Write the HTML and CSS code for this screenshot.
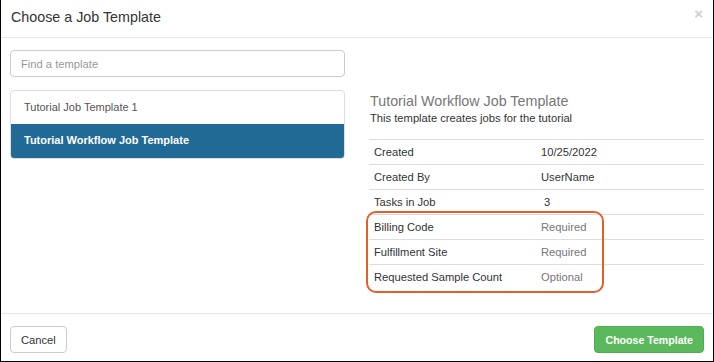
FILE: index.html
```html
<!DOCTYPE html>
<html lang="en">
<head>
  <meta charset="UTF-8">
  <title>Choose a Job Template</title>
  <link rel="stylesheet" href="styles.css">
</head>
<body>
  <div class="modal">
    <div class="modal-header">
      <h4 class="modal-title">Choose a Job Template</h4>
      <span class="close">&times;</span>
    </div>
    <div class="modal-body">
      <div class="col-left">
        <input class="search" type="text" placeholder="Find a template">
        <div class="list-group">
          <div class="list-item">Tutorial Job Template 1</div>
          <div class="list-item active">Tutorial Workflow Job Template</div>
        </div>
      </div>
      <div class="col-right">
        <h3 class="tpl-title">Tutorial Workflow Job Template</h3>
        <p class="tpl-desc">This template creates jobs for the tutorial</p>
        <div class="tpl-table">
          <table>
            <tr><td>Created</td><td>10/25/2022</td></tr>
            <tr><td>Created By</td><td>UserName</td></tr>
            <tr><td>Tasks in Job</td><td>&nbsp;3</td></tr>
            <tr><td>Billing Code</td><td class="muted">Required</td></tr>
            <tr><td>Fulfillment Site</td><td class="muted">Required</td></tr>
            <tr><td>Requested Sample Count</td><td class="muted">Optional</td></tr>
          </table>
          <div class="highlight"></div>
        </div>
      </div>
    </div>
    <div class="modal-footer">
      <button class="btn">Cancel</button>
      <button class="btn btn-success">Choose Template</button>
    </div>
  </div>
</body>
</html>
```

FILE: styles.css
```css
* {
  box-sizing: border-box;
}
body {
  margin: 0;
  font-family: "Liberation Sans", Arial, sans-serif;
  font-size: 11.2px;
  color: #333;
  background: #fff;
}
.modal {
  width: 714px;
  height: 362px;
  border: 1px solid #000;
  border-top: none;
  display: flex;
  flex-direction: column;
}
.modal-header {
  height: 38px;
  border-bottom: 1px solid #e5e5e5;
  padding: 0 9px;
  display: flex;
  align-items: center;
  justify-content: space-between;
}
.modal-title {
  margin: 0 0 4px 1px;
  font-size: 14.3px;
  font-weight: normal;
  color: #333;
}
.close {
  font-size: 15px;
  font-weight: bold;
  color: #cfcfcf;
  margin: 0 1px 10px 0;
}
.modal-body {
  flex: 1;
  padding: 12px 9px 0 9px;
  display: flex;
  gap: 24px;
}
.col-left,
.col-right {
  width: 335px;
}
.search {
  display: block;
  width: 100%;
  height: 27px;
  border: 1px solid #ccc;
  border-radius: 4px;
  padding: 0 10px;
  font-family: inherit;
  font-size: 11.2px;
  color: #555;
}
.search::placeholder {
  color: #999;
}
.list-group {
  margin-top: 13px;
  border: 1px solid #ddd;
  border-radius: 4px;
  overflow: hidden;
}
.list-item {
  height: 33px;
  line-height: 32px;
  padding: 0 13px;
  font-size: 11px;
  color: #555;
}
.list-item.active {
  height: 34px;
  background: #226a96;
  color: #fff;
  font-weight: bold;
}
.col-right {
  padding-top: 42px;
}
.tpl-title {
  margin: 0 0 0 1px;
  font-size: 14.3px;
  font-weight: normal;
  color: #777;
  line-height: 18px;
}
.tpl-desc {
  margin: 1px 0 13px 1px;
  line-height: 15px;
  font-size: 11.2px;
}
.tpl-table {
  position: relative;
}
table {
  width: 100%;
  border-collapse: collapse;
}
td {
  border-top: 1px solid #ddd;
  height: 25px;
  padding: 0 5px;
}
td:first-child {
  width: 167px;
}
td.muted {
  color: #777;
}
.highlight {
  position: absolute;
  left: -3px;
  top: 72px;
  width: 238px;
  height: 82px;
  border: 2px solid #e2602e;
  border-radius: 10px;
}
.modal-footer {
  height: 48px;
  border-top: 1px solid #e5e5e5;
  padding: 12px 9px 0 9px;
  display: flex;
  justify-content: space-between;
  align-items: flex-start;
}
.btn {
  height: 27px;
  padding: 0 10px;
  border: 1px solid #ccc;
  border-radius: 4px;
  background: #fff;
  font-family: inherit;
  font-size: 11.2px;
  color: #333;
}
.btn-success {
  background: #5cb85c;
  border-color: #4cae4c;
  color: #fff;
  font-weight: bold;
  font-size: 10.6px;
}
```
